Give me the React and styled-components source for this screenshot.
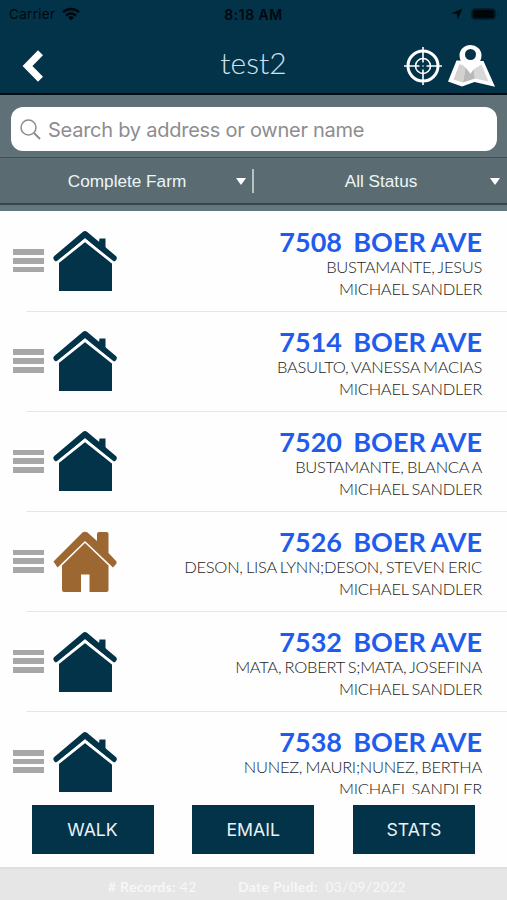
import React from 'react'
import styled, { createGlobalStyle } from 'styled-components'

const GlobalStyle = createGlobalStyle`
    * {
        box-sizing: border-box;
    }
    body {
        margin: 0;
        background: #fefefe;
    }
`

const Screen = styled.div`
    display: flex;
    flex-direction: column;
    width: 507px;
    height: 900px;
    overflow: hidden;
    background: #fefefe;
`

const Header = styled.header`
    flex: none;
    height: 95px;
    background: #023349;
    border-bottom: 2px solid #000a12;
`

const StatusBar = styled.div`
    display: grid;
    grid-template-columns: 1fr auto 1fr;
    align-items: center;
    height: 28px;
    padding: 0 8px;
    font-family: Inter, sans-serif;
    font-size: 13.5px;
    color: #01080d;
`

const Carrier = styled.div`
    display: flex;
    align-items: center;
    gap: 7px;
    padding-left: 1px;
    letter-spacing: 0.3px;
`

const Time = styled.div`
    font-size: 14px;
    font-weight: 600;
    letter-spacing: 0.5px;
`

const Indicators = styled.div`
    display: flex;
    align-items: center;
    justify-content: flex-end;
    gap: 8px;
`

const NavBar = styled.div`
    display: grid;
    grid-template-columns: 1fr auto 1fr;
    align-items: center;
    height: 65px;
    padding: 11px 12px 0;
`

const Title = styled.h1`
    margin: 0;
    padding-bottom: 8px;
    font-family: Lato, sans-serif;
    font-size: 30px;
    font-weight: 300;
    line-height: 38px;
    color: #d3e1f0;
`

const NavIcons = styled.div`
    display: flex;
    align-items: center;
    justify-content: flex-end;
    gap: 6px;
`

const SearchArea = styled.div`
    flex: none;
    height: 63px;
    padding: 12px 10px 0 11px;
    background: #5f7176;
    border-bottom: 1px solid #3c5056;
`

const SearchBox = styled.label`
    display: flex;
    align-items: center;
    gap: 7px;
    height: 44px;
    padding-left: 9px;
    background: #fff;
    border-radius: 12px;
`

const SearchInput = styled.input`
    flex: 1;
    min-width: 0;
    padding: 2px 0 0;
    border: 0;
    outline: 0;
    background: none;
    font-family: Inter, sans-serif;
    font-size: 20px;
    letter-spacing: -0.25px;
    &::placeholder {
        color: #8d8d90;
        opacity: 1;
    }
`

const Filters = styled.div`
    flex: none;
    display: flex;
    height: 53px;
    background: #5a6c71;
    border-bottom: 6px solid #64777c;
`

const Filter = styled.div`
    display: grid;
    grid-template-columns: 1fr auto;
    align-items: center;
    width: ${props => props.$width}px;
    height: 47px;
    padding: 2px ${props => props.$gutter}px 0 18px;
    border-bottom: 2px solid #34494f;
    font-family: 'Liberation Sans', sans-serif;
    font-size: 17.2px;
    text-align: center;
    color: #edf6f8;
`

const Caret = styled.span`
    border: 5px solid transparent;
    border-top: 7px solid #fff;
    border-bottom: 0;
`

const Separator = styled.div`
    width: 2px;
    height: 47px;
    padding: 11px 0 10px;
    background: #b4c2c5 content-box;
    border-bottom: 2px solid #34494f;
`

const List = styled.main`
    flex: none;
    height: 583px;
    overflow: hidden;
`

const Row = styled.div`
    display: flex;
    height: 100.1px;
    padding: 15px 25px 0 13px;
`

const Divider = styled.div`
    height: 1px;
    margin: 0 0 -1px 26px;
    background: #e6e6e7;
`

const Handle = styled.div`
    display: flex;
    flex-direction: column;
    gap: 3px;
    width: 31px;
    margin: 23.4px 9px 0 0;
`

const Bar = styled.span`
    height: 5.7px;
    background: #a7a7a7;
`

const HouseSlot = styled.div`
    padding-top: 4.3px;
`

const Details = styled.div`
    flex: 1;
    text-align: right;
    white-space: pre;
    font-family: Lato, sans-serif;
    word-spacing: -0.9px;
`

const Address = styled.div`
    height: 30px;
    font-size: 27px;
    font-weight: 700;
    line-height: 32px;
    color: #1f5cee;
`

const Person = styled.div`
    font-size: 16.5px;
    font-weight: 300;
    line-height: 22px;
    letter-spacing: -0.28px;
    color: #1c1c1c;
`

const Actions = styled.div`
    flex: none;
    display: flex;
    gap: 38.7px;
    height: 73px;
    padding: 11px 31.5px 0;
`

const Action = styled.button`
    width: 122px;
    height: 49px;
    padding: 0;
    border: 0;
    background: #023349;
    font-family: Inter, sans-serif;
    font-size: 17.7px;
    color: #e9f2f7;
`

const Footer = styled.footer`
    flex: none;
    display: flex;
    height: 33px;
    padding: 7px 0 0 108px;
    background: #e6e6e6;
    border-top: 2px solid #dedede;
    font-family: Lato, sans-serif;
    font-size: 14px;
    line-height: 22px;
    letter-spacing: 0.3px;
    white-space: pre;
    color: #f7f7f7;
`

const Records = styled.div`
    width: 130px;
`

const WifiIcon = () => (
    <svg width="18" height="14" viewBox="0 0 18 14" fill="none" stroke="#01080d" strokeWidth="2.3">
        <path d="M1 5.3a11.3 11.3 0 0 1 16 0M4 8.6a7 7 0 0 1 10 0" />
        <path d="M9 13.5 6 10.5a4.3 4.3 0 0 1 6 0Z" fill="#01080d" stroke="none" />
    </svg>
)

const LocationIcon = () => (
    <svg width="12" height="12" viewBox="0 0 12 12" fill="#01080d">
        <path d="M11.5.5 6.8 11.5 6 6 .5 5.2Z" />
    </svg>
)

const BatteryIcon = () => (
    <svg width="28" height="12" viewBox="0 0 28 12">
        <rect x=".5" y=".5" width="24" height="11" rx="3.2" fill="none" stroke="#02202f" />
        <rect x="1.5" y="1.5" width="22" height="9" rx="1.8" fill="#00060a" />
        <path d="M26 4.2v3.6q1.3-.4 1.3-1.8T26 4.2Z" fill="#02202f" />
    </svg>
)

const BackIcon = () => (
    <svg width="32" height="32" viewBox="-10 0 32 32" fill="none" stroke="#fff" strokeWidth="7">
        <path d="M18.5 2.8 5.5 16l13 13.2" />
    </svg>
)

const TargetIcon = () => (
    <svg width="38" height="38" viewBox="0 0 38 38" fill="none" stroke="#fff">
        <circle cx="19" cy="19" r="15" strokeWidth="3" />
        <circle cx="19" cy="19" r="7.5" strokeWidth="1.6" />
        <path d="M19 0v15.5M19 22.5v15.5M0 19h15.5M22.5 19h15.5" strokeWidth="1.6" />
        <circle cx="19" cy="19" r=".8" fill="#fff" stroke="none" />
    </svg>
)

const MapIcon = () => (
    <svg width="47" height="42" viewBox="0 0 47 42">
        <path d="M8.5 15.5 0 36.5l14 5 12.5-4.5L47 41.8 35.5 16Z" fill="#fff" />
        <path d="M11.5 19 5.5 34.5 15 37.5 17.5 21.5Z" fill="#d2d2d2" />
        <path d="M17.5 21.5 15 37.5 27 33.5 26 24Z" fill="#b9b9b9" />
        <path d="M26 24 27 33.5 40.5 36.5 33.5 19.5Z" fill="#d8d8d8" />
        <path d="M22.5 29C20 24 11.5 18.5 11.5 10.5a11 10.5 0 0 1 22 0C33.5 18.5 25 24 22.5 29Z" fill="#fff" />
        <circle cx="22.5" cy="9.5" r="5.5" fill="#023349" />
    </svg>
)

const SearchIcon = () => (
    <svg width="21" height="21" viewBox="0 0 21 21" fill="none" stroke="#8d8d90" strokeWidth="1.5">
        <circle cx="8.5" cy="8.5" r="7.5" />
        <path d="M14 14l6 6" strokeWidth="1.9" />
    </svg>
)

const HouseIcon = () => (
    <svg width="65" height="62" viewBox="0 0 65 62">
        <path d="M3.6 28.2 32 4.2 60.6 28.2" fill="none" stroke="#023349" strokeWidth="6.2" strokeLinecap="round" strokeLinejoin="round" />
        <path d="M46.500 8.500h6v14l-7-6Z" fill="#023349" />
        <path d="M6 31 32 9.8 59 31.5V61H6Z" fill="#023349" />
        <path d="M3.5 33.2 32 10.4 61 33.4" fill="none" stroke="#fff" strokeWidth="2.8" />
        <path d="M0 32.5h6v4H0ZM59 32.5h6v4h-6Z" fill="#fff" />
    </svg>
)

const CottageIcon = () => (
    <svg width="65" height="62" viewBox="0 0 65 62" fill="#9c6730">
        <path d="M.5 30.5 29.5 1.5Q32 0 34.5 1.5L44 10V3q0-2 2-2h7.5q2 0 2 2v19l8 8.5v2L60 36.5 32 10 4.5 36.5Z" />
        <path d="M32 12 55.5 34.5v24.5q0 2-2 2H36.5V43.5H28V61H11q-2 0-2-2V34.5Z" />
    </svg>
)

const houses = [
    { number: '7508', owner: 'BUSTAMANTE, JESUS' },
    { number: '7514', owner: 'BASULTO, VANESSA MACIAS' },
    { number: '7520', owner: 'BUSTAMANTE, BLANCA A' },
    { number: '7526', owner: 'DESON, LISA LYNN;DESON, STEVEN ERIC', visited: true },
    { number: '7532', owner: 'MATA, ROBERT S;MATA, JOSEFINA' },
    { number: '7538', owner: 'NUNEZ, MAURI;NUNEZ, BERTHA' }
]

const HouseRow = ({ house }) => (
    <>
        <Row>
            <Handle><Bar /><Bar /><Bar /></Handle>
            <HouseSlot>{house.visited ? <CottageIcon /> : <HouseIcon />}</HouseSlot>
            <Details>
                <Address>{house.number}{'  '}BOER AVE</Address>
                <Person>{house.owner}</Person>
                <Person>MICHAEL SANDLER</Person>
            </Details>
        </Row>
        <Divider />
    </>
)

const App = () => {
    return (
        <Screen>
            <GlobalStyle />
            <Header>
                <StatusBar>
                    <Carrier>Carrier <WifiIcon /></Carrier>
                    <Time>8:18 AM</Time>
                    <Indicators><LocationIcon /><BatteryIcon /></Indicators>
                </StatusBar>
                <NavBar>
                    <BackIcon />
                    <Title>test2</Title>
                    <NavIcons><TargetIcon /><MapIcon /></NavIcons>
                </NavBar>
            </Header>
            <SearchArea>
                <SearchBox>
                    <SearchIcon />
                    <SearchInput placeholder="Search by address or owner name" />
                </SearchBox>
            </SearchArea>
            <Filters>
                <Filter $width={252} $gutter={6}>Complete Farm<Caret /></Filter>
                <Separator />
                <Filter $width={253} $gutter={7}>All Status<Caret /></Filter>
            </Filters>
            <List>
                {houses.map(house => <HouseRow key={house.number} house={house} />)}
            </List>
            <Actions>
                <Action>WALK</Action>
                <Action>EMAIL</Action>
                <Action>STATS</Action>
            </Actions>
            <Footer>
                <Records><b># Records:</b> 42</Records>
                <div><b>Date Pulled:</b>{'  '}03/09/2022</div>
            </Footer>
        </Screen>
    )
}

export default App
